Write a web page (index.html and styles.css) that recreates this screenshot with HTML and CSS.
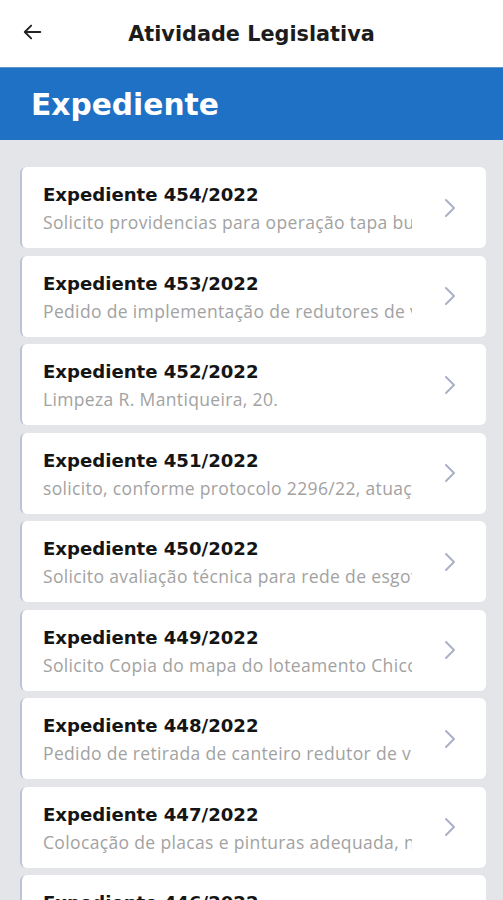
FILE: index.html
```html
<!DOCTYPE html>
<html lang="pt-BR">
<head>
  <meta charset="UTF-8" />
  <meta name="viewport" content="width=device-width, initial-scale=1" />
  <title>Atividade Legislativa</title>
  <link rel="stylesheet" href="styles.css">
</head>
<body>

  <header class="topbar">
    <button class="back-btn" aria-label="Voltar">
      <svg width="22" height="22" viewBox="0 0 24 24" fill="none" stroke="#222" stroke-width="2" stroke-linecap="round" stroke-linejoin="round">
        <path d="M20 12H4"/>
        <path d="M10 5l-7 7 7 7"/>
      </svg>
    </button>
    <h1>Atividade Legislativa</h1>
  </header>

  <div class="banner">Expediente</div>

  <div class="list" id="list">
    <!-- Itens adicionados dinamicamente -->
  </div>

  <script>
    // Lista de expedientes
    const items = [
      { num: '454/2022', desc: 'Solicito providencias para operação tapa buraco na Rua' },
      { num: '453/2022', desc: 'Pedido de implementação de redutores de velocidade' },
      { num: '452/2022', desc: 'Limpeza R. Mantiqueira, 20.' },
      { num: '451/2022', desc: 'solicito, conforme protocolo 2296/22, atuação da fiscalização' },
      { num: '450/2022', desc: 'Solicito avaliação técnica para rede de esgoto na rua' },
      { num: '449/2022', desc: 'Solicito Copia do mapa do loteamento Chico Mendes' },
      { num: '448/2022', desc: 'Pedido de retirada de canteiro redutor de velocidade' },
      { num: '447/2022', desc: 'Colocação de placas e pinturas adequada, na rua' },
      { num: '446/2022', desc: 'Solicito limpeza e capina' }
    ];

    const list = document.getElementById('list');

    items.forEach(item => {
      const card = document.createElement('div');
      card.className = 'card';
      card.innerHTML = `
        <div class="card-text">
          <h3>Expediente ${item.num}</h3>
          <p>${item.desc}</p>
        </div>
        <svg class="chevron" width="16" height="22" viewBox="0 0 16 22" fill="none" stroke="#aab1c6" stroke-width="2" stroke-linecap="round" stroke-linejoin="round">
          <path d="M4 3l8 8-8 8"/>
        </svg>
      `;
      list.appendChild(card);
    });
  </script>
</body>
</html>
```

FILE: styles.css
```css
body {
  margin: 0;
  height: 900px;
  overflow: hidden;
  background: #e3e5e9;
  font-family: "Open Sans", Arial, sans-serif;
}
.topbar {
  position: relative;
  height: 67px;
  background: #fff;
  display: flex;
  align-items: center;
  justify-content: center;
}
.topbar h1 {
  margin: 0;
  font-family: "DejaVu Sans", sans-serif;
  font-size: 20.8px;
  font-weight: 700;
  color: #1c1c1c;
}
.back-btn {
  position: absolute;
  left: 22px;
  top: 21px;
  padding: 0;
  background: none;
  border: none;
}
.banner {
  height: 73px;
  background: #1e71c5;
  color: #fff;
  font-family: "DejaVu Sans", sans-serif;
  font-weight: 700;
  font-size: 29.7px;
  padding-left: 31px;
  display: flex;
  align-items: center;
  border-top: 1px solid #5f95cf;
  box-sizing: border-box;
}
.list {
  padding: 27px 17px 0 20px;
  display: flex;
  flex-direction: column;
  gap: 7.5px;
}
.card {
  height: 81px;
  flex-shrink: 0;
  background: #fff;
  border-radius: 6px;
  border-left: 2px solid #bcc5d6;
  box-sizing: border-box;
  padding: 0 28px 0 21px;
  display: flex;
  align-items: center;
  gap: 30px;
}
.card-text {
  flex: 1;
  min-width: 0;
  padding-top: 2px;
}
.card h3 {
  margin: 0 0 5px;
  font-family: "DejaVu Sans", sans-serif;
  font-size: 18.1px;
  font-weight: 700;
  color: #151515;
  line-height: 22px;
}
.card p {
  margin: 0;
  font-size: 17.5px;
  letter-spacing: 0.35px;
  line-height: 22px;
  color: #a2a2a2;
  white-space: nowrap;
  overflow: hidden;
}
.chevron {
  flex-shrink: 0;
}
```
